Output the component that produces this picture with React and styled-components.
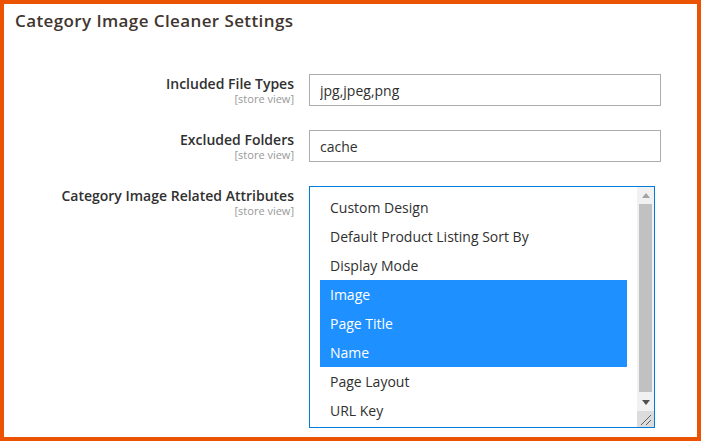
import React from "react";
import styled, { createGlobalStyle } from "styled-components";

const attributes = [
  { label: "Custom Design" },
  { label: "Default Product Listing Sort By" },
  { label: "Display Mode" },
  { label: "Image", selected: true },
  { label: "Page Title", selected: true },
  { label: "Name", selected: true },
  { label: "Page Layout" },
  { label: "URL Key" },
];

function Field({ label, children }) {
  return (
    <>
      <LabelCell>
        <LabelText>{label}</LabelText>
        <Scope>[store view]</Scope>
      </LabelCell>
      <div>{children}</div>
    </>
  );
}

export default function App() {
  return (
    <Frame>
      <GlobalStyle />
      <Title>Category Image Cleaner Settings</Title>
      <Fields>
        <Field label="Included File Types">
          <TextInput defaultValue="jpg,jpeg,png" />
        </Field>
        <Field label="Excluded Folders">
          <TextInput defaultValue="cache" />
        </Field>
        <Field label="Category Image Related Attributes">
          <MultiSelect>
            <OptionList>
              {attributes.map((a) => (
                <Option key={a.label} $selected={a.selected}>
                  {a.label}
                </Option>
              ))}
            </OptionList>
            <Scrollbar>
              <ScrollButton>
                <svg width="8" height="5" viewBox="0 0 8 5">
                  <path d="M0 5 L4 0 L8 5 Z" fill="#a3a3a3" />
                </svg>
              </ScrollButton>
              <Track>
                <Thumb />
              </Track>
              <ScrollButton>
                <svg width="8" height="5" viewBox="0 0 8 5">
                  <path d="M0 0 L8 0 L4 5 Z" fill="#505050" />
                </svg>
              </ScrollButton>
              <Resizer>
                <svg width="16" height="16" viewBox="0 0 16 16">
                  <path d="M4 14 L14 4 M9 14 L14 9" stroke="#606060" strokeWidth="1" />
                </svg>
              </Resizer>
            </Scrollbar>
          </MultiSelect>
        </Field>
      </Fields>
    </Frame>
  );
}

const GlobalStyle = createGlobalStyle`
  html, body {
    margin: 0;
    padding: 0;
    background: #ffffff;
  }
  body {
    font-family: "Open Sans", "Liberation Sans", sans-serif;
  }
`
const Frame = styled.div`
  box-sizing: border-box;
  width: 701px;
  height: 441px;
  border: 4px solid #eb5202;
  background: #ffffff;
  padding: 7px 11px 0;
  overflow: hidden;
`
const Title = styled.h2`
  margin: 0;
  font-size: 17px;
  line-height: 20px;
  font-weight: 600;
  letter-spacing: 0.4px;
  color: #41362f;
`
const Fields = styled.div`
  display: grid;
  grid-template-columns: 279px 352px;
  column-gap: 15px;
  row-gap: 24px;
  margin-top: 43px;
`
const LabelCell = styled.div`
  text-align: right;
`
const LabelText = styled.div`
  font-size: 14px;
  line-height: 19px;
  font-weight: 600;
  color: #303030;
`
const Scope = styled.div`
  font-size: 11px;
  line-height: 12px;
  color: #999999;
`
const TextInput = styled.input`
  box-sizing: border-box;
  display: block;
  width: 352px;
  height: 32px;
  margin: 0;
  padding: 0 10px;
  border: 1px solid #adadad;
  border-radius: 0;
  font-family: "Open Sans", "Liberation Sans", sans-serif;
  font-size: 14px;
  color: #303030;
  outline: none;
`
const MultiSelect = styled.div`
  box-sizing: border-box;
  display: flex;
  width: 346px;
  height: 242px;
  border: 1px solid #007bdb;
  background: #ffffff;
`
const OptionList = styled.div`
  flex: 1;
  padding: 6px 10px 0;
  overflow: hidden;
`
const Option = styled.div`
  height: 29px;
  line-height: 29px;
  padding: 0 10px;
  font-size: 14px;
  white-space: nowrap;
  color: ${(p) => (p.$selected ? "#ffffff" : "#303030")};
  background: ${(p) => (p.$selected ? "#1e90ff" : "transparent")};
`
const Scrollbar = styled.div`
  display: flex;
  flex-direction: column;
  width: 17px;
  background: #f1f1f1;
`
const ScrollButton = styled.div`
  display: flex;
  align-items: center;
  justify-content: center;
  height: 17px;
`
const Track = styled.div`
  flex: 1;
  padding: 0 2px;
`
const Thumb = styled.div`
  height: 188px;
  background: #c1c1c1;
`
const Resizer = styled.div`
  height: 16px;
  background: #dcdcdc;
  display: flex;

  svg {
    display: block;
  }
`
